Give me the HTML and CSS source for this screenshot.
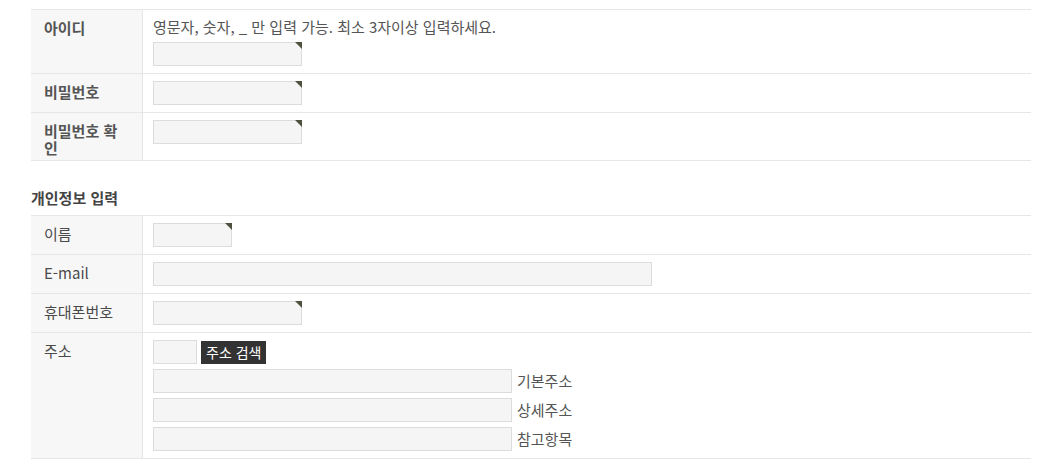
FILE: index.html
```html
<!DOCTYPE html>
<html lang="ko">
<head>
<meta charset="utf-8">
<title>회원가입</title>
<link rel="stylesheet" href="styles.css">
</head>
<body>
<div class="page">
  <div class="form-table bold-labels">
    <div class="row">
      <div class="label">아이디</div>
      <div class="cell cell-stack">
        <p class="help">영문자, 숫자, _ 만 입력 가능. 최소 3자이상 입력하세요.</p>
        <span class="req"><input type="text" class="inp w-mid"></span>
      </div>
    </div>
    <div class="row">
      <div class="label">비밀번호</div>
      <div class="cell"><span class="req"><input type="password" class="inp w-mid"></span></div>
    </div>
    <div class="row">
      <div class="label">비밀번호 확인</div>
      <div class="cell"><span class="req"><input type="password" class="inp w-mid"></span></div>
    </div>
  </div>

  <h2 class="section-title">개인정보 입력</h2>

  <div class="form-table">
    <div class="row">
      <div class="label">이름</div>
      <div class="cell"><span class="req"><input type="text" class="inp w-short"></span></div>
    </div>
    <div class="row">
      <div class="label">E-mail</div>
      <div class="cell"><input type="text" class="inp w-long"></div>
    </div>
    <div class="row">
      <div class="label">휴대폰번호</div>
      <div class="cell"><span class="req"><input type="text" class="inp w-mid"></span></div>
    </div>
    <div class="row">
      <div class="label">주소</div>
      <div class="cell cell-addr">
        <div class="addr-line zip-line">
          <input type="text" class="inp w-zip">
          <button type="button" class="btn-dark">주소 검색</button>
        </div>
        <div class="addr-line"><input type="text" class="inp w-addr"><span class="addr-text">기본주소</span></div>
        <div class="addr-line"><input type="text" class="inp w-addr"><span class="addr-text">상세주소</span></div>
        <div class="addr-line"><input type="text" class="inp w-addr"><span class="addr-text">참고항목</span></div>
      </div>
    </div>
  </div>
</div>
</body>
</html>
```

FILE: styles.css
```css
* { box-sizing: border-box; }

body {
  margin: 0;
  background: #fff;
  font-family: "Noto Sans CJK KR", "Noto Sans", sans-serif;
  font-size: 15px;
  color: #555;
}

.page {
  width: 1000px;
  margin-left: 31px;
  padding-top: 9px;
}

.form-table {
  border-top: 1px solid #e6e6e6;
}

.row {
  display: grid;
  grid-template-columns: 112px 1fr;
  border-bottom: 1px solid #e6e6e6;
}

.label {
  background: #f7f7f7;
  border-right: 1px solid #e6e6e6;
  padding: 9px 16px 4px 13px;
  line-height: 17px;
  color: #4a4a4a;
}

.bold-labels .label {
  font-weight: 700;
  color: #555;
}

.cell {
  padding: 7px 10px;
  display: flex;
  align-items: flex-start;
}

.cell-stack {
  flex-direction: column;
  gap: 5px;
}

.help {
  margin: 0;
  line-height: 20px;
  color: #555;
}

.req {
  position: relative;
  display: inline-block;
  line-height: 0;
}

.req::after {
  content: "";
  position: absolute;
  top: 0;
  right: 0;
  width: 0;
  height: 0;
  border-top: 7px solid #50503f;
  border-left: 7px solid transparent;
}

.inp {
  display: block;
  height: 24px;
  margin: 0;
  padding: 0 4px;
  border: 1px solid #dcdcdc;
  background: #f5f5f5;
  font: inherit;
  outline: none;
}

.w-mid { width: 149px; }
.w-short { width: 79px; }
.w-long { width: 499px; }
.w-zip { width: 44px; }
.w-addr { width: 359px; }

.section-title {
  margin: 27px 0 7px;
  font-size: 15px;
  line-height: 20px;
  font-weight: 700;
  color: #444;
}

.cell-addr {
  flex-direction: column;
  gap: 5px;
}

.addr-line {
  display: flex;
  align-items: center;
  gap: 5px;
}

.zip-line {
  gap: 4px;
}

.btn-dark {
  height: 23px;
  margin: 0;
  padding: 0 5px;
  border: 0;
  background: #333;
  color: #fff;
  font-family: inherit;
  font-size: 14px;
  line-height: 23px;
  cursor: pointer;
}

.addr-text {
  color: #555;
  line-height: 20px;
}
```
